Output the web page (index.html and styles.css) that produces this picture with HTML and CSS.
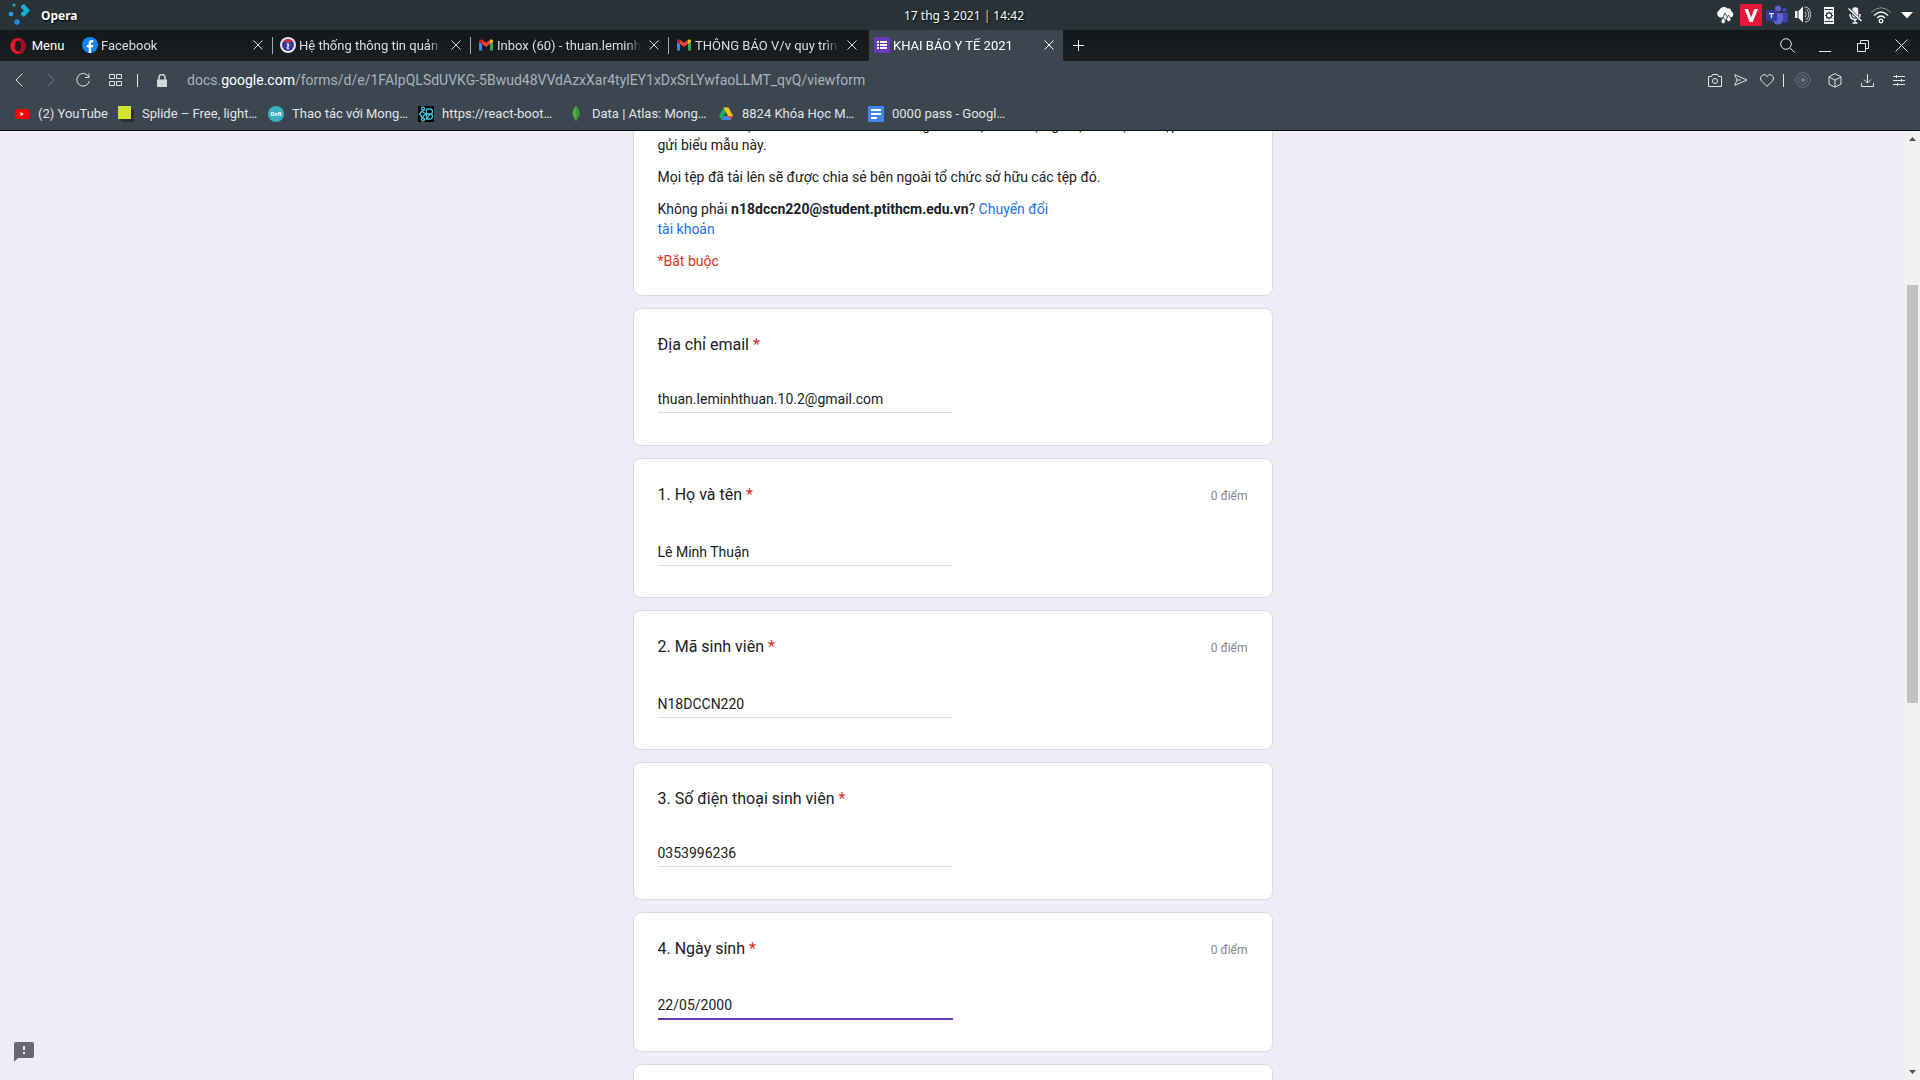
FILE: index.html
```html
<!DOCTYPE html>
<html lang="vi">
<head>
<meta charset="utf-8">
<title>KHAI BÁO Y TẾ 2021</title>
<link rel="stylesheet" href="styles.css">
</head>
<body>
<div class="screen">
  <header class="panel">
    <div class="panel-app">
      <svg class="launcher" width="22" height="24" viewBox="0 0 22 24"><g fill="#1da5dc"><circle cx="6" cy="2" r="1.500" fill="#14b4cf"/><circle cx="3" cy="11" r="2.300"/><circle cx="9" cy="19" r="2.700" fill="#2f86dd"/><path d="M13 3l3-2 6 6.500-6 6.500-3-2v-2l3-2.500-3-2.500z" fill="#14afd2"/></g></svg>
      <strong>Opera</strong>
    </div>
    <time class="clock">17 thg 3 2021 <span class="bar">|</span> 14:42</time>
    <div class="tray">
      <svg width="18" height="18" viewBox="0 0 18 18" fill="#fcfcfc"><path d="M4 11.500a3.800 3.800 0 0 1-1-7A5 5 0 0 1 11 2.200 4 4 0 0 1 15.500 5.500a3.200 3.200 0 0 1-.5 6z"/><g stroke="#2a3439" stroke-width=".8"><path d="M9 7l2 3.500a2.200 2.200 0 1 1-3.500 0z"/><path d="M12.500 9l2 3a2.200 2.200 0 1 1-3.500 0z"/><path d="M7 11l2 3a2.200 2.200 0 1 1-3.500 0z"/></g></svg>
      <svg width="22" height="22" viewBox="0 0 22 22"><rect width="22" height="22" rx="1" fill="#e51937"/><path d="M4.500 5H8l3 8.500L14.500 5H18l-5.300 13H9.500z" fill="#fff"/></svg>
      <svg width="22" height="20" viewBox="0 0 22 20"><circle cx="18.500" cy="5" r="2.300" fill="#3d44a8"/><path d="M15 8h7v6a3 3 0 0 1-6 1z" fill="#3d44a8"/><circle cx="12" cy="3.500" r="3" fill="#5b63d6"/><path d="M7 8h10v6a5 5 0 0 1-10 1z" fill="#5b63d6"/><rect y="5" width="11" height="11" rx="1" fill="#343ba0"/><path d="M3 8h5v1.200H6.200V13H4.800V9.200H3z" fill="#dfe1ff"/></svg>
      <svg width="16" height="18" viewBox="0 0 16 18" fill="#fcfcfc"><path d="M0 5h2.500v7H0zM3.500 5l4.500-4.500v16L3.500 12z"/><path d="M10 5.500q2.500 3 0 6M11.500 3q4.500 5.500 0 11M9.500 1Q15.500 1 15.500 8.500T10 16" fill="none" stroke="#c6cacb"/></svg>
      <svg width="10" height="17" viewBox="0 0 10 17"><path d="M0 0h10v17H0z" fill="#fcfcfc"/><path d="M1 2.500h8M1 14.500h8" stroke="#2a3439"/><circle cx="5" cy="8.500" r="2.700" fill="none" stroke="#2a3439" stroke-width="1.200"/><path d="M5 4.500v2M5 10.500v2M1 8.500h2M7 8.500h2M2.200 5.700l1.300 1.300M6.500 10l1.300 1.300M7.800 5.700L6.500 7M3.500 10l-1.300 1.300" stroke="#2a3439"/></svg>
      <svg width="14" height="17" viewBox="0 0 14 17" fill="none" stroke="#fcfcfc" stroke-width="1.500"><rect x="5" y="1" width="4.500" height="9" rx="2" fill="#fcfcfc"/><path d="M2 7q0 5.500 5 5.500T12 7M7 12v4M4.500 16h5"/><path d="M1 2l12 12" stroke="#2a3439" stroke-width="3"/><path d="M.5 1.500l13 12.500"/></svg>
      <svg width="22" height="18" viewBox="0 0 22 18" fill="none"><path d="M1 6.500q10-9.500 20 0" stroke="#87908f"/><path d="M4 9.500q7-7 14 0M7 12q4-4 8 0" stroke="#fcfcfc" stroke-width="1.200"/><circle cx="11" cy="15" r="1.800" stroke="#fcfcfc" stroke-width="1.300"/></svg>
      <svg width="12" height="7" viewBox="0 0 12 7"><path d="M0 0h12L6 6.500z" fill="#fcfcfc"/></svg>
    </div>
  </header>

  <nav class="tabs" aria-label="Tabs">
    <button class="menu" type="button"><svg width="16" height="16" viewBox="0 0 16 16"><path fill-rule="evenodd" fill="#e8182c" d="M8 0a7.700 8 0 1 0 0 16A7.700 8 0 1 0 8 0zm0 2.500c2 0 3.200 2.400 3.200 5.500S10 13.500 8 13.500 4.800 11.100 4.800 8 6 2.500 8 2.500z"/><path fill="#a50c1d" d="M8 2.500C9.500.8 11.500.9 13 2a8 8 0 0 1 0 12c-1.500 1.100-3.500 1.200-5 -.5 2 0 3.200-2.400 3.200-5.500S10 2.500 8 2.500z"/></svg>Menu</button>
    <div class="tab">
      <svg width="16" height="16" viewBox="0 0 16 16"><circle cx="8" cy="8" r="8" fill="#1086f5"/><path d="M6.700 16v-5.700h-2V8h2V6.200c0-2 1.200-3.100 3-3.100l1.700.1v2h-1c-1 0-1.300.6-1.300 1.200V8h2.200l-.4 2.300H9.100V16z" fill="#fff"/></svg>
      <span class="tab-title">Facebook</span>
      <button class="close" type="button" aria-label="Đóng"><svg width="10" height="10" viewBox="0 0 10 10"><path d="M.5.5l9 9M9.500.5l-9 9"/></svg></button>
    </div>
    <div class="tab">
      <svg width="16" height="16" viewBox="0 0 16 16"><circle cx="8" cy="8" r="8" fill="#e8e6ee"/><circle cx="8" cy="8" r="6" fill="#34399b"/><path d="M3.500 4.200a6 6 0 0 1 9 0L11.500 5h-7z" fill="#d8283b"/><path d="M8 5.500v7" stroke="#fff"/><path d="M6.500 7q4.500 1 1.500 2.300T9 12" stroke="#fff" stroke-width=".7" fill="none"/></svg>
      <span class="tab-title">Hệ thống thông tin quản lý</span>
      <button class="close" type="button" aria-label="Đóng"><svg width="10" height="10" viewBox="0 0 10 10"><path d="M.5.5l9 9M9.500.5l-9 9"/></svg></button>
    </div>
    <div class="tab">
      <svg width="16" height="16" viewBox="0 0 16 16"><use href="#gmail"/></svg>
      <span class="tab-title">Inbox (60) - thuan.leminhthuan</span>
      <button class="close" type="button" aria-label="Đóng"><svg width="10" height="10" viewBox="0 0 10 10"><path d="M.5.5l9 9M9.500.5l-9 9"/></svg></button>
    </div>
    <div class="tab">
      <svg width="16" height="16" viewBox="0 0 16 16"><g id="gmail"><path d="M1 13.500h3V7L1 5z" fill="#4285f4"/><path d="M12 13.500h3V5l-3 2z" fill="#34a853"/><path d="M12 3.500V7l3-2V4c0-1.500-1.500-2-3-1.200z" fill="#fbbc04"/><path d="M4 7V2.800l4 3 4-3V7l-4 3z" fill="#ea4335"/><path d="M1 4v1l3 2V2.800C2.500 2 1 2.500 1 4z" fill="#c5221f"/></g></svg>
      <span class="tab-title">THÔNG BÁO V/v quy trình khai</span>
      <button class="close" type="button" aria-label="Đóng"><svg width="10" height="10" viewBox="0 0 10 10"><path d="M.5.5l9 9M9.500.5l-9 9"/></svg></button>
    </div>
    <div class="tab active">
      <svg width="16" height="16" viewBox="0 0 16 16"><rect width="16" height="16" rx="1" fill="#673ab7"/><path d="M3 4h2v2H3zM6 4h7v2H6zM3 7h2v2H3zM6 7h7v2H6zM3 10h2v2H3zM6 10h7v2H6z" fill="#fff"/></svg>
      <span class="tab-title">KHAI BÁO Y TẾ 2021</span>
      <button class="close" type="button" aria-label="Đóng"><svg width="10" height="10" viewBox="0 0 10 10"><path d="M.5.5l9 9M9.500.5l-9 9"/></svg></button>
    </div>
    <button class="new-tab" type="button" aria-label="Thẻ mới"><svg width="11" height="11" viewBox="0 0 11 11"><path d="M5.500 0v11M0 5.500h11"/></svg></button>
    <div class="window-controls">
      <button type="button" aria-label="Tìm kiếm"><svg width="15" height="15" viewBox="0 0 15 15"><circle cx="6" cy="6" r="5.300"/><path d="M10 10l4.500 4.500"/></svg></button>
      <button type="button" aria-label="Thu nhỏ"><svg width="12" height="14" viewBox="0 0 12 14"><path d="M0 12.500h12"/></svg></button>
      <button type="button" aria-label="Khôi phục"><svg width="12" height="12" viewBox="0 0 12 12"><path d="M.5 3.500h8v8h-8zM3.500 3.500v-3h8v8h-3"/></svg></button>
      <button type="button" aria-label="Đóng cửa sổ"><svg width="13" height="13" viewBox="0 0 13 13"><path d="M.5.5l12 12M12.500.5l-12 12"/></svg></button>
    </div>
  </nav>

  <div class="address">
    <div class="nav-buttons">
      <button type="button" aria-label="Quay lại"><svg width="8" height="14" viewBox="0 0 8 14"><path d="M7.500.5L1 7l6.500 6.500"/></svg></button>
      <button type="button" aria-label="Tiến" disabled><svg width="8" height="14" viewBox="0 0 8 14"><path d="M.5.5L7 7 .5 13.500"/></svg></button>
      <button type="button" aria-label="Tải lại"><svg width="14" height="14" viewBox="0 0 14 14"><path d="M12.500 3.500A6.300 6.300 0 1 0 13.300 8M13 .5v4H9"/></svg></button>
      <button type="button" aria-label="Trang nhanh"><svg width="13" height="12" viewBox="0 0 13 12"><path d="M.5.500h5v4h-5zM7.500.500h5v4h-5zM.5 7.500h5v4h-5zM7.500 7.500h5v4h-5z"/></svg></button>
    </div>
    <span class="divider"></span>
    <svg class="lock" width="10" height="13" viewBox="0 0 10 13"><path d="M0 5.500h10V13H0z" fill="#d5d8da"/><path d="M2 6V3.500a3 3 0 0 1 6 0V6" stroke="#d5d8da" stroke-width="1.500" fill="none"/></svg>
    <div class="url">docs.<span class="host">google.com</span>/forms/d/e/1FAIpQLSdUVKG-5Bwud48VVdAzxXar4tylEY1xDxSrLYwfaoLLMT_qvQ/viewform</div>
    <div class="page-tools">
      <button type="button" aria-label="Chụp màn hình"><svg width="14" height="13" viewBox="0 0 14 13"><path d="M.5 2.500h3l1-2h5l1 2h3v10H.5z"/><circle cx="7" cy="7" r="2.500"/></svg></button>
      <button type="button" aria-label="Gửi"><svg width="14" height="12" viewBox="0 0 14 12"><path d="M.7.7L13 6 .7 11.300 3 6zM3 6h4"/></svg></button>
      <button type="button" aria-label="Yêu thích"><svg width="14" height="13" viewBox="0 0 14 13"><path d="M7 12.300L1.500 7C-.5 4.500 1 .7 4 .7c1.500 0 2.500.8 3 2 .5-1.200 1.500-2 3-2 3 0 4.500 3.800 2.500 6.300z"/></svg></button>
      <span class="divider"></span>
    </div>
    <div class="extensions">
      <button type="button" class="dim" aria-label="Tiện ích"><svg width="16" height="16" viewBox="0 0 16 16"><circle cx="8" cy="8" r="7.300"/><circle cx="8" cy="8" r="4.500"/><circle class="dot" cx="8" cy="8" r="2"/></svg></button>
      <button type="button" aria-label="Ví"><svg width="14" height="15" viewBox="0 0 14 15"><path d="M7 .7l6 3v7.500l-6 3-6-3V3.700zM1 4l6 3 6-3M7 7v7"/></svg></button>
      <button type="button" aria-label="Tải xuống"><svg width="13" height="13" viewBox="0 0 13 13"><path d="M6.500 0v9M3 5.500L6.500 9 10 5.500M.5 9v3.500h12V9"/></svg></button>
      <button type="button" aria-label="Cài đặt"><svg width="12" height="11" viewBox="0 0 12 11"><path d="M0 1.500h12M0 5.500h12M0 9.500h12M3.500 0v3M8.500 4v3M4.500 8v3"/></svg></button>
    </div>
  </div>

  <nav class="bookmarks" aria-label="Dấu trang">
    <a class="short" href="#"><svg width="16" height="16" viewBox="0 0 16 16"><rect x="1" y="3" width="14" height="10" rx="2" fill="#f00"/><path d="M6.500 6v4L10 8z" fill="#fff"/></svg><span>(2) YouTube</span></a>
    <a href="#"><svg width="16" height="16" viewBox="0 0 16 16"><path d="M3 3h13v13H3z" fill="#2b3034"/><path d="M0 0h13v13H0z" fill="#d2e22f"/></svg><span>Splide – Free, light…</span></a>
    <a href="#"><svg width="16" height="16" viewBox="0 0 16 16"><circle cx="8" cy="8" r="8" fill="#38b0be"/><text x="8" y="10" text-anchor="middle" class="favicon-text">Dvft</text></svg><span>Thao tác với Mong…</span></a>
    <a href="#"><svg width="16" height="16" viewBox="0 0 16 16"><path d="M0 0h16v16H0z"/><g fill="none" stroke="#3fc4dc" stroke-width="1.300"><path d="M8.500 3h3.500a2.300 2.300 0 0 1 0 5H8.500m3.500 0a2.500 2.500 0 0 1 0 5H8.500zM8.500 3v10M4 5.500L1.500 8 4 11l4-3zM4 5.500l3-2M4 11l3 3"/><circle cx="5" cy="2.500" r="1.500"/><circle cx="5" cy="13.500" r="1.500"/></g></svg><span>https://react-boot…</span></a>
    <a href="#"><svg width="16" height="16" viewBox="0 0 16 16"><path d="M8 0c4 4 5 9 .3 14V16h-.6v-2C3 9 4 4 8 0z" fill="#4faa41"/><path d="M8 0c4 4 5 9 .3 14z" fill="#3f9638"/></svg><span>Data | Atlas: Mong…</span></a>
    <a href="#"><svg width="16" height="16" viewBox="0 0 16 16"><path d="M5.500 1.500h5L8 6 3.500 14 1 10z" fill="#22a45d"/><path d="M5.500 1.500h5L15 10h-5z" fill="#fbc116"/><path d="M5.800 10H15l-2.300 4H3.500z" fill="#4285f4"/><path d="M10 10h5l-2.300 4z" fill="#ea4335"/></svg><span>8824 Khóa Học M…</span></a>
    <a href="#"><svg width="16" height="16" viewBox="0 0 16 16"><rect width="16" height="16" rx="1" fill="#4285f4"/><path d="M3 3h10v2H3zM3 7h10v2H3zM3 11h6v2H3z" fill="#fff"/></svg><span>0000 pass - Googl…</span></a>
  </nav>

  <div class="viewport">
    <main class="page">
      <form class="form">
        <section class="card intro">
          <p>Tên và ảnh được liên kết với Tài khoản Google của bạn sẽ được ghi lại khi bạn tải tệp lên và gửi biểu mẫu này.</p>
          <p>Mọi tệp đã tải lên sẽ được chia sẻ bên ngoài tổ chức sở hữu các tệp đó.</p>
          <p class="account">Không phải <strong>n18dccn220@student.ptithcm.edu.vn</strong>? <a href="#">Chuyển đổi tài khoản</a></p>
          <p class="required">*Bắt buộc</p>
        </section>
        <section class="card">
          <div class="question"><label for="email">Địa chỉ email <span class="star">*</span></label></div>
          <input id="email" type="text" value="thuan.leminhthuan.10.2@gmail.com">
        </section>
        <section class="card scored">
          <div class="question"><label for="name">1. Họ và tên <span class="star">*</span></label><span class="points">0 điểm</span></div>
          <input id="name" type="text" value="Lê Minh Thuận">
        </section>
        <section class="card scored">
          <div class="question"><label for="code">2. Mã sinh viên <span class="star">*</span></label><span class="points">0 điểm</span></div>
          <input id="code" type="text" value="N18DCCN220">
        </section>
        <section class="card">
          <div class="question"><label for="phone">3. Số điện thoại sinh viên <span class="star">*</span></label></div>
          <input id="phone" type="text" value="0353996236">
        </section>
        <section class="card scored">
          <div class="question"><label for="birth">4. Ngày sinh <span class="star">*</span></label><span class="points">0 điểm</span></div>
          <input id="birth" class="current" type="text" value="22/05/2000">
        </section>
        <section class="card scored"></section>
      </form>
      <button class="report" type="button" aria-label="Báo cáo sự cố"><svg width="20" height="20" viewBox="0 0 20 20"><path d="M2 0h16a2 2 0 0 1 2 2v12a2 2 0 0 1-2 2H4l-4 4V2a2 2 0 0 1 2-2zm7 4v4h2V4zm0 6v2h2v-2z" fill="#6b6772" fill-rule="evenodd"/></svg></button>
    </main>
    <div class="scrollbar">
      <svg width="7" height="4" viewBox="0 0 7 4"><path d="M0 4L3.500 0 7 4z"/></svg>
      <div class="track"><div class="thumb"></div></div>
      <svg width="7" height="4" viewBox="0 0 7 4"><path d="M0 0l3.500 4L7 0z"/></svg>
    </div>
  </div>
</div>
</body>
</html>
```
FILE: styles.css
```css
* {
  box-sizing: border-box;
}

body {
  margin: 0;
  font-family: Roboto, "Noto Sans", sans-serif;
  font-size: 13px;
  color: #202124;
}

button {
  display: flex;
  align-items: center;
  justify-content: center;
  padding: 0;
  border: 0;
  background: none;
  font: inherit;
  color: inherit;
}

a {
  text-decoration: none;
}

svg {
  display: block;
  flex: none;
}

.screen {
  display: flex;
  flex-direction: column;
  height: 100vh;
  overflow: hidden;
}

/* Desktop panel */
.panel {
  display: grid;
  grid-template-columns: 1fr auto 1fr;
  align-items: center;
  height: 30px;
  padding-left: 8px;
  background: #283237;
  color: #fcfcfc;
  font-family: "Noto Sans", sans-serif;
  font-size: 12px;
  text-shadow: 1px 1px 2px #000;
}

.panel-app {
  display: flex;
  align-items: center;
  gap: 11px;
}

.bar {
  color: #f0d070;
}

.tray {
  display: grid;
  grid-auto-flow: column;
  grid-auto-columns: 26px;
  align-items: center;
  justify-content: end;
  justify-items: center;
}

/* Tab strip */
.tabs {
  display: flex;
  align-items: stretch;
  height: 31px;
  background: linear-gradient(#15181b, #1b1e21);
  color: #dcdee0;
}

.tabs button svg,
.address button svg {
  fill: none;
  stroke: currentColor;
}

.menu {
  gap: 6px;
  width: 74px;
  color: #fff;
}

.tabs .menu svg {
  stroke: none;
}

.tab {
  position: relative;
  display: flex;
  align-items: center;
  gap: 3px;
  width: 198px;
  padding: 0 8px 1px;
}

.tab + .tab:not(.active)::before {
  content: "";
  position: absolute;
  left: 0;
  top: 7px;
  height: 17px;
  border-left: 1px solid #a3abb2;
}

.tab-title {
  flex: 1;
  overflow: hidden;
  white-space: nowrap;
  mask-image: linear-gradient(to right, #000 90%, transparent);
}

.tab.active {
  width: 194px;
  margin-left: 3px;
  padding: 0 8px 1px 5px;
  background: #3b4650;
  color: #fff;
}

.close {
  width: 12px;
  margin-left: 4px;
}

.new-tab {
  width: 31px;
  color: #fff;
}

.window-controls {
  display: flex;
  margin-left: auto;
  color: #e6e8ea;
}

.window-controls button {
  width: 38px;
}

/* Address bar */
.address {
  display: flex;
  align-items: center;
  height: 38px;
  background: #3b4650;
  color: #e1e4e6;
}

.nav-buttons {
  display: flex;
  padding-left: 3px;
}

.nav-buttons button {
  width: 32px;
}

.nav-buttons button:disabled {
  color: #727b84;
}

.divider {
  width: 1px;
  height: 13px;
  margin: 0 6px;
  background: #e1e4e6;
}

.lock {
  margin: 0 20px 0 13px;
}

.url {
  flex: 1;
  color: #a9b3bc;
  font-size: 14px;
}

.host {
  color: #fff;
}

.page-tools {
  display: flex;
  align-items: center;
}

.page-tools button {
  width: 26px;
}

.page-tools .divider {
  margin: 0 3px;
}

.extensions {
  display: flex;
  padding-right: 5px;
}

.extensions button {
  width: 32px;
}

.extensions .dim {
  color: #68727b;
}

.dim .dot {
  fill: #7c858d;
}

/* Bookmarks */
.bookmarks {
  display: flex;
  align-items: center;
  gap: 12px;
  height: 32px;
  padding: 0 14px 2px;
  border-bottom: 1px solid #0c0e10;
  background: #3b4650;
}

.bookmarks a {
  display: flex;
  align-items: center;
  gap: 8px;
  width: 138px;
  color: #e1e4e6;
  white-space: nowrap;
}

.bookmarks .short {
  width: 92px;
}

.favicon-text {
  fill: #fff;
  font-size: 6px;
  font-weight: bold;
}

/* Form page */
.viewport {
  display: flex;
  flex: 1;
  min-height: 0;
}

.page {
  position: relative;
  flex: 1;
  display: flex;
  justify-content: center;
  overflow: hidden;
  background: #efebf8;
}

.form {
  display: flex;
  flex-direction: column;
  gap: 12px;
  width: 640px;
  margin-top: -41px;
}

.card {
  flex: none;
  min-height: 138px;
  padding: 24px;
  border: 1px solid #dadce0;
  border-radius: 8px;
  background: #fff;
}

.intro {
  padding-right: 40px;
  font-size: 14px;
  line-height: 20px;
}

.intro p {
  margin: 0 0 12px;
}

.intro .account {
  max-width: 408px;
}

.intro .required {
  margin: 0;
  color: #d93025;
}

.intro a {
  color: #1a73e8;
}

.question {
  display: flex;
  justify-content: space-between;
  align-items: baseline;
  font-size: 16px;
  line-height: 24px;
}

.star {
  color: #d93025;
}

.points {
  color: #80868b;
  font-size: 12px;
}

.card input {
  display: block;
  width: 295px;
  height: 28px;
  margin-top: 28px;
  padding: 0;
  border: 0;
  border-bottom: 1px solid #dadce0;
  outline: 0;
  background: none;
  color: #202124;
  font: 14px Roboto, "Noto Sans", sans-serif;
}

.card.scored {
  min-height: 140px;
}

.scored input {
  margin-top: 30px;
}

.card .current {
  border-bottom: 2px solid #673ab7;
}

.report {
  position: absolute;
  left: 14px;
  bottom: 18px;
}

.scrollbar {
  display: flex;
  flex-direction: column;
  align-items: center;
  width: 15px;
  padding: 6px 0;
  background: #f1f1f1;
  fill: #505050;
}

.track {
  display: flex;
  flex-direction: column;
  flex: 1;
  width: 11px;
}

.thumb {
  height: 45%;
  margin-top: 144px;
  background: #c1c1c1;
}
```
